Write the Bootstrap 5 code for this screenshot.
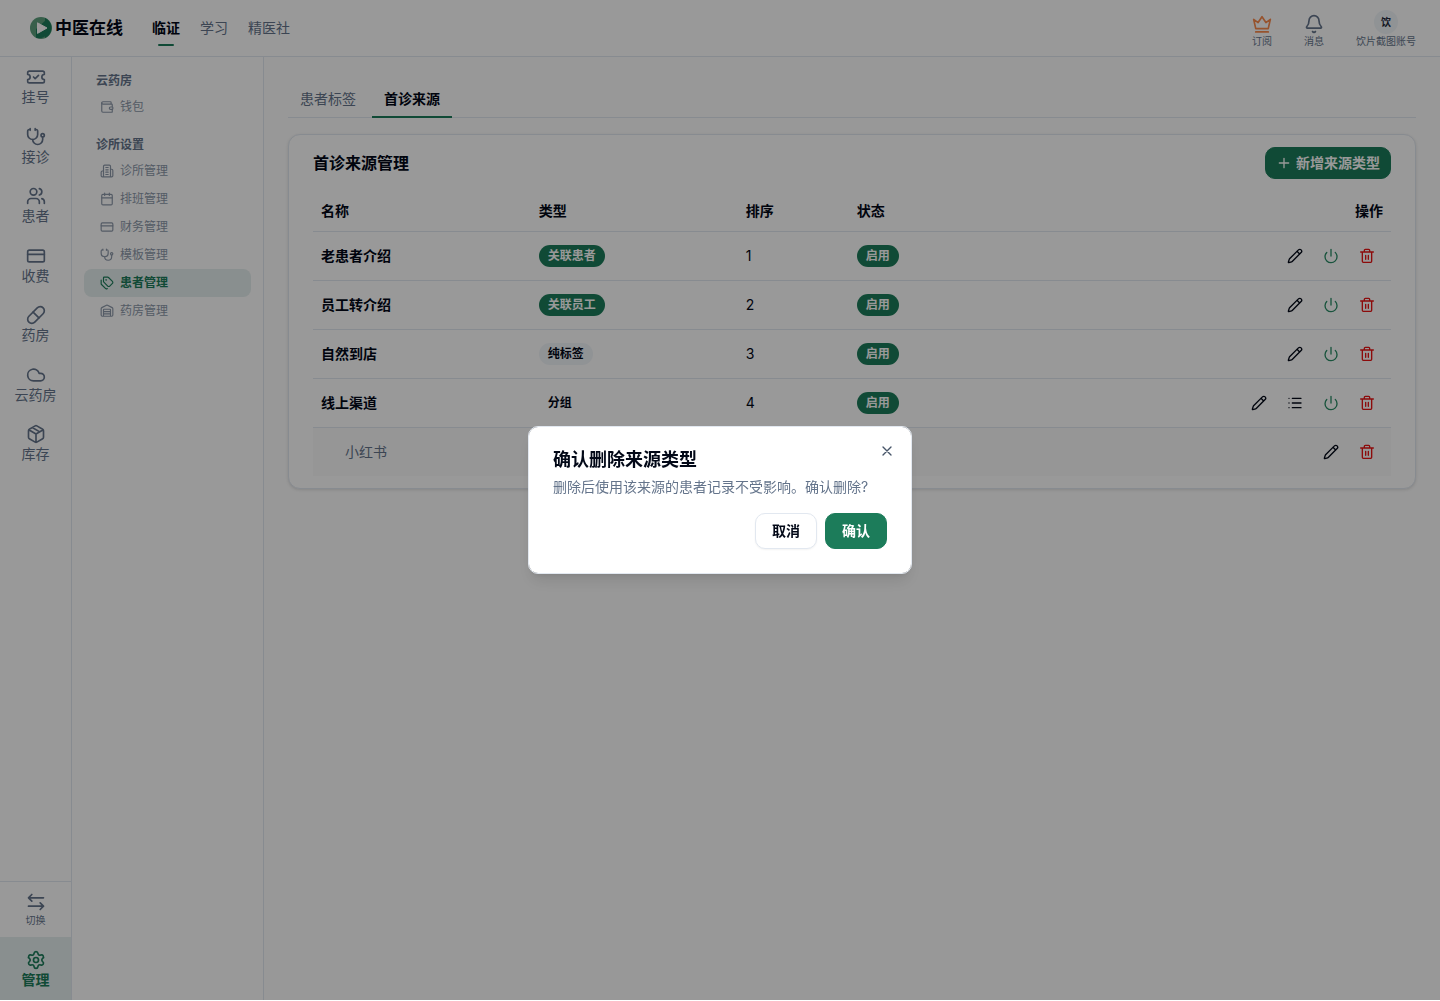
<!DOCTYPE html>
<html lang="zh-CN">
<head>
<meta charset="utf-8">
<meta name="viewport" content="width=device-width, initial-scale=1">
<title>首诊来源管理 - 中医在线</title>
<link href="https://cdn.jsdelivr.net/npm/bootstrap@5.3.0/dist/css/bootstrap.min.css" rel="stylesheet">
<style>
:root{--ink:#020817;--muted:#64748b;--line:#e2e8f0;--brand:#1c7c5a;--soft:#e4eeee}
body{font-family:Inter,"Noto Sans CJK SC",sans-serif;font-size:14px;line-height:20px;color:var(--ink);background:#fff}
a{text-decoration:none;color:inherit}
.ico{width:16px;height:16px;flex:none;fill:none;stroke:currentColor;stroke-width:2;stroke-linecap:round;stroke-linejoin:round}
.ico-lg{width:20px;height:20px}
.ico-sm{width:14px;height:14px}
.ico-crown{color:#fb8a4c}
.app-shell{min-height:calc(100vh - 1px)}
.top-bar{height:57px;border-bottom:1px solid var(--line);padding:0 24px 0 30px}
.brand-link{gap:3px}
.brand-name{font-size:17px;font-weight:600;line-height:24px}
.top-nav{gap:20px;margin-left:29px}
.top-nav a{color:var(--muted)}
.top-nav a.current{color:var(--ink);font-weight:700;position:relative}
.top-nav a.current::after{content:"";position:absolute;left:6px;right:6px;bottom:-8px;height:2px;border-radius:2px;background:var(--brand)}
.top-tools{gap:32px;padding-top:1px;color:var(--muted);font-size:10px;line-height:12px}
.top-tools a{gap:1px}
.avatar-dot{width:24px;height:24px;border-radius:50%;background:#f1f5f9;color:#1e293b;font-weight:600}
.rail{width:72px;border-right:1px solid var(--line);color:var(--muted);line-height:1.25}
.rail a{display:flex;flex-direction:column;align-items:center;gap:1px;padding:10px 0 11px}
.rail .switcher{border-top:1px solid var(--line);font-size:10px;gap:2px;padding-bottom:10px}
.rail .current{padding:13px 0 12px;background:var(--soft);color:var(--brand);font-weight:700}
.side-menu{width:192px;border-right:1px solid var(--line);padding:12px;font-size:12px;color:#8c98a9}
.side-menu h2{font-size:12px;line-height:24px;font-weight:700;color:var(--muted);margin:0;padding-left:12px}
.side-menu section+section{margin-top:12px}
.side-menu a{display:flex;align-items:center;gap:6px;height:28px;padding-left:16px;border-radius:8px}
.side-menu a.current{background:var(--soft);color:var(--brand);font-weight:600}
.workspace{padding:24px;background:#fdfdfd;min-width:0}
.page-tabs{gap:4px;border-bottom:1px solid var(--line);margin-bottom:16px}
.page-tabs a{padding:8px 12px;color:var(--muted);margin-bottom:-1px;border-bottom:2px solid transparent;line-height:19px}
.page-tabs a.current{color:var(--ink);font-weight:600;border-color:var(--brand)}
.panel{border:1px solid var(--line);border-radius:12px;padding:12px 24px;background:#fff;box-shadow:0 1px 3px rgba(0,0,0,.12)}
.panel h1{font-size:16px;line-height:24px;font-weight:600}
.btn{font-size:14px;line-height:20px;font-weight:600;border-radius:10px}
.btn-brand{--bs-btn-bg:var(--brand);--bs-btn-color:#fff;--bs-btn-border-color:var(--brand);--bs-btn-hover-bg:#166a4c;--bs-btn-hover-color:#fff}
.btn-add{height:32px;padding:0 10px;gap:4px}
.source-table{--bs-table-bg:transparent;color:var(--ink);margin:12px 0 0;table-layout:fixed;border-color:var(--line)}
.source-table th,.source-table td{padding:0 8px;vertical-align:middle;font-weight:400}
.source-table thead th{height:40px;font-weight:600}
.source-table tbody th,.source-table tbody td{height:49px}
.source-table tbody th{font-weight:600}
.source-table tbody tr:last-child>*{border-bottom:0;background:#fafafa}
.source-table tr:last-child th.child-name{padding-left:32px;color:var(--muted);font-weight:400}
.pill-tag{display:inline-block;vertical-align:middle;border-radius:11px;font-size:12px;line-height:22px;padding:0 9px;font-weight:600}
.pill-on{background:var(--brand);color:#fff}
.pill-plain{background:#f1f5f9}
.act{display:flex;align-items:center;justify-content:center;width:32px;height:32px;padding:0;border:0;color:var(--ink)}
.act-power{color:#2a8c66}
.act-delete{color:#ea1313}
.modal,.modal-backdrop{height:calc(100% - 1px)}
.modal-backdrop.show{opacity:.4}
.confirm-box{max-width:384px}
.confirm-box .modal-content{border:1px solid var(--line);border-radius:10px;padding:24px;gap:16px;box-shadow:0 10px 15px -3px rgba(0,0,0,.1),0 4px 6px -4px rgba(0,0,0,.1)}
.confirm-box h2{font-size:18px;line-height:18px;font-weight:600;margin:0 0 8px}
.confirm-box p{color:var(--muted);margin:0}
.confirm-box .btn{height:36px;padding:0 16px}
.btn-cancel{--bs-btn-bg:#fff;--bs-btn-color:var(--ink);--bs-btn-border-color:var(--line);box-shadow:0 1px 2px rgba(0,0,0,.05)}
.dismiss{position:absolute;top:16px;right:16px;padding:0;border:0;background:none;display:flex;color:#475569}
</style>
<script src="https://cdn.jsdelivr.net/npm/bootstrap@5.3.0/dist/js/bootstrap.bundle.min.js"></script>
</head>
<body>
<svg class="d-none" xmlns="http://www.w3.org/2000/svg">
<symbol id="i-ticket" viewBox="0 0 24 24"><path d="M2 9a3 3 0 0 1 0 6v2a2 2 0 0 0 2 2h16a2 2 0 0 0 2-2v-2a3 3 0 0 1 0-6V7a2 2 0 0 0-2-2H4a2 2 0 0 0-2 2Z"/><path d="m9 12 2 2 4-4"/></symbol>
<symbol id="i-steth" viewBox="0 0 24 24"><path d="M11 2v2M5 2v2M5 3H4a2 2 0 0 0-2 2v4a6 6 0 0 0 12 0V5a2 2 0 0 0-2-2h-1"/><path d="M8 15a6 6 0 0 0 12 0v-3"/><circle cx="20" cy="10" r="2"/></symbol>
<symbol id="i-users" viewBox="0 0 24 24"><path d="M16 21v-2a4 4 0 0 0-4-4H6a4 4 0 0 0-4 4v2"/><circle cx="9" cy="7" r="4"/><path d="M22 21v-2a4 4 0 0 0-3-3.87M16 3.13a4 4 0 0 1 0 7.75"/></symbol>
<symbol id="i-card" viewBox="0 0 24 24"><rect x="2" y="5" width="20" height="14" rx="2"/><path d="M2 10h20"/></symbol>
<symbol id="i-pill" viewBox="0 0 24 24"><path d="m10.5 20.5 10-10a4.95 4.95 0 1 0-7-7l-10 10a4.95 4.95 0 1 0 7 7Z"/><path d="m8.5 8.5 7 7"/></symbol>
<symbol id="i-cloud" viewBox="0 0 24 24"><path d="M17.5 19H9a7 7 0 1 1 6.71-9h1.79a4.5 4.5 0 1 1 0 9Z"/></symbol>
<symbol id="i-box" viewBox="0 0 24 24"><path d="M11 21.73a2 2 0 0 0 2 0l7-4A2 2 0 0 0 21 16V8a2 2 0 0 0-1-1.73l-7-4a2 2 0 0 0-2 0l-7 4A2 2 0 0 0 3 8v8a2 2 0 0 0 1 1.73zM12 22V12M3.29 7 12 12l8.71-5M7.5 4.27l9 5.15"/></symbol>
<symbol id="i-swap" viewBox="0 0 24 24"><path d="M21 7H3M7 3 3 7l4 4M3 17h18M17 13l4 4-4 4"/></symbol>
<symbol id="i-gear" viewBox="0 0 24 24"><path d="M9.671 4.136a2.34 2.34 0 0 1 4.659 0 2.34 2.34 0 0 0 3.319 1.915 2.34 2.34 0 0 1 2.33 4.033 2.34 2.34 0 0 0 0 3.831 2.34 2.34 0 0 1-2.33 4.033 2.34 2.34 0 0 0-3.319 1.915 2.34 2.34 0 0 1-4.659 0 2.34 2.34 0 0 0-3.32-1.915 2.34 2.34 0 0 1-2.33-4.033 2.34 2.34 0 0 0 0-3.831A2.34 2.34 0 0 1 6.35 6.051a2.34 2.34 0 0 0 3.319-1.915"/><circle cx="12" cy="12" r="3"/></symbol>
<symbol id="i-wallet" viewBox="0 0 24 24"><path d="M19 7V4a1 1 0 0 0-1-1H5a2 2 0 0 0 0 4h15a1 1 0 0 1 1 1v4h-3a2 2 0 0 0 0 4h3a1 1 0 0 0 1-1v-2a1 1 0 0 0-1-1"/><path d="M3 5v14a2 2 0 0 0 2 2h15a1 1 0 0 0 1-1v-4"/></symbol>
<symbol id="i-building" viewBox="0 0 24 24"><path d="M6 22V4a2 2 0 0 1 2-2h8a2 2 0 0 1 2 2v18ZM6 12H4a2 2 0 0 0-2 2v6a2 2 0 0 0 2 2h2M18 9h2a2 2 0 0 1 2 2v9a2 2 0 0 1-2 2h-2M10 6h4M10 10h4M10 14h4M10 18h4"/></symbol>
<symbol id="i-calendar" viewBox="0 0 24 24"><path d="M8 2v4M16 2v4M3 10h18"/><rect x="3" y="4" width="18" height="18" rx="2"/></symbol>
<symbol id="i-tags" viewBox="0 0 24 24"><path d="M13.172 2a2 2 0 0 1 1.414.586l6.71 6.71a2.4 2.4 0 0 1 0 3.408l-4.592 4.592a2.4 2.4 0 0 1-3.408 0l-6.71-6.71A2 2 0 0 1 6 9.172V3a1 1 0 0 1 1-1z"/><path d="M2 7v6.172a2 2 0 0 0 .586 1.414l6.71 6.71a2.4 2.4 0 0 0 3.191.193"/><circle cx="10.5" cy="6.5" r=".5"/></symbol>
<symbol id="i-warehouse" viewBox="0 0 24 24"><path d="M18 21V10a1 1 0 0 0-1-1H7a1 1 0 0 0-1 1v11M22 19a2 2 0 0 1-2 2H4a2 2 0 0 1-2-2V8a2 2 0 0 1 1.132-1.803l7.95-3.974a2 2 0 0 1 1.837 0l7.948 3.974A2 2 0 0 1 22 8zM6 13h12M6 17h12"/></symbol>
<symbol id="i-crown" viewBox="0 0 24 24"><path d="M2 6.500 4.500 17.500h15L22 6.500l-5.300 3.800L12 3.200l-4.700 7.100zM4.500 21.500h15"/></symbol>
<symbol id="i-bell" viewBox="0 0 24 24"><path d="M10.268 21a2 2 0 0 0 3.464 0M3.262 15.326A1 1 0 0 0 4 17h16a1 1 0 0 0 .74-1.673C19.41 13.956 18 12.499 18 8A6 6 0 0 0 6 8c0 4.499-1.411 5.956-2.738 7.326"/></symbol>
<symbol id="i-pencil" viewBox="0 0 24 24"><path d="M21.174 6.812a1 1 0 0 0-3.986-3.987L3.842 16.174a2 2 0 0 0-.5.83l-1.321 4.352a.5.5 0 0 0 .623.622l4.353-1.32a2 2 0 0 0 .83-.497zM15 5l4 4"/></symbol>
<symbol id="i-power" viewBox="0 0 24 24"><path d="M12 2v10M18.4 6.6a9 9 0 1 1-12.77.04"/></symbol>
<symbol id="i-trash" viewBox="0 0 24 24"><path d="M2.500 6h19M19 6v14a1.500 1.500 0 0 1-1.500 1.500h-11A1.500 1.500 0 0 1 5 20V6M8 6V3.500A1.500 1.500 0 0 1 9.500 2h5A1.500 1.500 0 0 1 16 3.500V6M10 11v6M14 11v6"/></symbol>
<symbol id="i-list" viewBox="0 0 24 24"><path d="M3 5h.01M3 12h.01M3 19h.01M8 5h13M8 12h13M8 19h13"/></symbol>
<symbol id="i-plus" viewBox="0 0 24 24"><path d="M5 12h14M12 5v14"/></symbol>
<symbol id="i-x" viewBox="0 0 24 24"><path d="M18 6 6 18M6 6l12 12"/></symbol>
</svg>

<div class="app-shell d-flex flex-column">
  <header class="top-bar d-flex align-items-center">
    <a href="#" class="brand-link d-flex align-items-center">
      <svg width="22" height="22" viewBox="0 0 22 22" aria-hidden="true"><circle cx="11" cy="11" r="11" fill="#5c9e7c"/><path d="M15 1a11 11 0 0 1-9 19.800V12L16 3z" fill="#1c7c5a"/><path d="M15 1a11 11 0 0 1 0 20z" fill="#1c7c5a"/><path d="M7.500 5.800 17 11 7.500 16.400Z" fill="#fff" stroke="#fff" stroke-width="1" stroke-linejoin="round"/></svg>
      <span class="brand-name">中医在线</span>
    </a>
    <nav class="top-nav d-flex">
      <a href="#" class="current">临证</a><a href="#">学习</a><a href="#">精医社</a>
    </nav>
    <div class="top-tools d-flex ms-auto align-items-end">
      <a href="#" class="d-flex flex-column align-items-center"><svg class="ico ico-lg ico-crown"><use href="#i-crown"/></svg>订阅</a>
      <a href="#" class="d-flex flex-column align-items-center"><svg class="ico ico-lg"><use href="#i-bell"/></svg>消息</a>
      <a href="#" class="d-flex flex-column align-items-center"><span class="avatar-dot d-flex align-items-center justify-content-center">饮</span>饮片截图账号</a>
    </div>
  </header>
  <div class="d-flex flex-grow-1">
    <nav class="rail d-flex flex-column flex-shrink-0">
      <a href="#"><svg class="ico ico-lg"><use href="#i-ticket"/></svg>挂号</a>
      <a href="#"><svg class="ico ico-lg"><use href="#i-steth"/></svg>接诊</a>
      <a href="#"><svg class="ico ico-lg"><use href="#i-users"/></svg>患者</a>
      <a href="#"><svg class="ico ico-lg"><use href="#i-card"/></svg>收费</a>
      <a href="#"><svg class="ico ico-lg"><use href="#i-pill"/></svg>药房</a>
      <a href="#"><svg class="ico ico-lg"><use href="#i-cloud"/></svg>云药房</a>
      <a href="#"><svg class="ico ico-lg"><use href="#i-box"/></svg>库存</a>
      <a href="#" class="switcher mt-auto"><svg class="ico ico-lg"><use href="#i-swap"/></svg>切换</a>
      <a href="#" class="current"><svg class="ico ico-lg"><use href="#i-gear"/></svg>管理</a>
    </nav>
    <aside class="side-menu flex-shrink-0">
      <section>
        <h2>云药房</h2>
        <a href="#"><svg class="ico ico-sm"><use href="#i-wallet"/></svg>钱包</a>
      </section>
      <section>
        <h2>诊所设置</h2>
        <a href="#"><svg class="ico ico-sm"><use href="#i-building"/></svg>诊所管理</a>
        <a href="#"><svg class="ico ico-sm"><use href="#i-calendar"/></svg>排班管理</a>
        <a href="#"><svg class="ico ico-sm"><use href="#i-card"/></svg>财务管理</a>
        <a href="#"><svg class="ico ico-sm"><use href="#i-steth"/></svg>模板管理</a>
        <a href="#" class="current"><svg class="ico ico-sm"><use href="#i-tags"/></svg>患者管理</a>
        <a href="#"><svg class="ico ico-sm"><use href="#i-warehouse"/></svg>药房管理</a>
      </section>
    </aside>
    <main class="workspace flex-grow-1">
      <nav class="page-tabs d-flex"><a href="#">患者标签</a><a href="#" class="current">首诊来源</a></nav>
      <section class="panel">
        <div class="d-flex align-items-center justify-content-between">
          <h1 class="mb-0">首诊来源管理</h1>
          <button type="button" class="btn btn-brand btn-add d-flex align-items-center"><svg class="ico"><use href="#i-plus"/></svg>新增来源类型</button>
        </div>
        <table class="table source-table">
          <colgroup><col style="width:20.2%"><col style="width:19.2%"><col style="width:10.3%"><col style="width:20%"><col></colgroup>
          <thead><tr><th scope="col">名称</th><th scope="col">类型</th><th scope="col">排序</th><th scope="col">状态</th><th scope="col" class="text-end">操作</th></tr></thead>
          <tbody>
            <tr><th scope="row">老患者介绍</th><td><span class="pill-tag pill-on">关联患者</span></td><td>1</td><td><span class="pill-tag pill-on">启用</span></td>
              <td><div class="d-flex justify-content-end gap-1"><button type="button" class="btn act" aria-label="编辑"><svg class="ico"><use href="#i-pencil"/></svg></button><button type="button" class="btn act act-power" aria-label="停用"><svg class="ico"><use href="#i-power"/></svg></button><button type="button" class="btn act act-delete" aria-label="删除"><svg class="ico"><use href="#i-trash"/></svg></button></div></td></tr>
            <tr><th scope="row">员工转介绍</th><td><span class="pill-tag pill-on">关联员工</span></td><td>2</td><td><span class="pill-tag pill-on">启用</span></td>
              <td><div class="d-flex justify-content-end gap-1"><button type="button" class="btn act" aria-label="编辑"><svg class="ico"><use href="#i-pencil"/></svg></button><button type="button" class="btn act act-power" aria-label="停用"><svg class="ico"><use href="#i-power"/></svg></button><button type="button" class="btn act act-delete" aria-label="删除"><svg class="ico"><use href="#i-trash"/></svg></button></div></td></tr>
            <tr><th scope="row">自然到店</th><td><span class="pill-tag pill-plain">纯标签</span></td><td>3</td><td><span class="pill-tag pill-on">启用</span></td>
              <td><div class="d-flex justify-content-end gap-1"><button type="button" class="btn act" aria-label="编辑"><svg class="ico"><use href="#i-pencil"/></svg></button><button type="button" class="btn act act-power" aria-label="停用"><svg class="ico"><use href="#i-power"/></svg></button><button type="button" class="btn act act-delete" aria-label="删除"><svg class="ico"><use href="#i-trash"/></svg></button></div></td></tr>
            <tr><th scope="row">线上渠道</th><td><span class="pill-tag">分组</span></td><td>4</td><td><span class="pill-tag pill-on">启用</span></td>
              <td><div class="d-flex justify-content-end gap-1"><button type="button" class="btn act" aria-label="编辑"><svg class="ico"><use href="#i-pencil"/></svg></button><button type="button" class="btn act" aria-label="子项"><svg class="ico"><use href="#i-list"/></svg></button><button type="button" class="btn act act-power" aria-label="停用"><svg class="ico"><use href="#i-power"/></svg></button><button type="button" class="btn act act-delete" aria-label="删除"><svg class="ico"><use href="#i-trash"/></svg></button></div></td></tr>
            <tr><th scope="row" class="child-name">小红书</th><td></td><td></td><td></td>
              <td><div class="d-flex justify-content-end gap-1"><button type="button" class="btn act" aria-label="编辑"><svg class="ico"><use href="#i-pencil"/></svg></button><button type="button" class="btn act act-delete" aria-label="删除"><svg class="ico"><use href="#i-trash"/></svg></button></div></td></tr>
          </tbody>
        </table>
      </section>
    </main>
  </div>
</div>

<div class="modal-backdrop show"></div>
<div class="modal d-block" role="dialog" aria-modal="true" aria-labelledby="confirm-title">
  <div class="modal-dialog modal-dialog-centered confirm-box">
    <div class="modal-content">
      <div><h2 id="confirm-title">确认删除来源类型</h2><p>删除后使用该来源的患者记录不受影响。确认删除?</p></div>
      <div class="d-flex justify-content-end gap-2"><button type="button" class="btn btn-cancel">取消</button><button type="button" class="btn btn-brand">确认</button></div>
      <button type="button" class="dismiss" aria-label="关闭"><svg class="ico"><use href="#i-x"/></svg></button>
    </div>
  </div>
</div>
</body>
</html>
